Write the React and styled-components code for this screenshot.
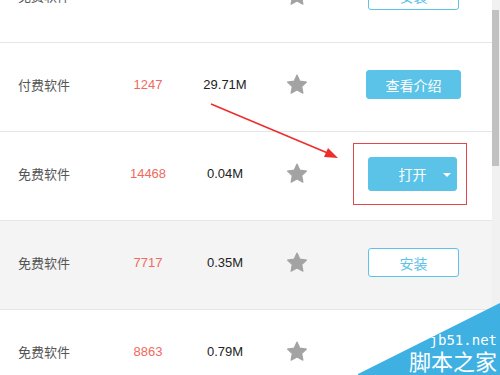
import styled, { createGlobalStyle } from "styled-components";

const GlobalStyle = createGlobalStyle`
  html, body {
    margin: 0;
    padding: 0;
    width: 500px;
    height: 375px;
    overflow: hidden;
    background: #fff;
  }
  body {
    font-family: "Liberation Sans", "Noto Sans CJK SC", sans-serif;
  }
`;

const Page = styled.div`
  position: relative;
  width: 500px;
  height: 375px;
  display: flex;
  overflow: hidden;
`;

const List = styled.div`
  width: 492px;
  margin-top: -46px;
  display: flex;
  flex-direction: column;
`;

const Row = styled.div`
  box-sizing: border-box;
  height: 89px;
  flex-shrink: 0;
  display: grid;
  grid-template-columns: 100px 60px 94px 50px 1fr;
  align-items: center;
  padding: 0 0 5px 18px;
  background: ${(p) => (p.$shaded ? "#f4f4f4" : "#fff")};
  border-bottom: 1px solid #e6e6e6;
`;

const Category = styled.div`
  font-family: "Noto Sans CJK SC", sans-serif;
  font-size: 13px;
  color: #555;
`;

const Count = styled.div`
  text-align: center;
  font-size: 13px;
  color: #f06a60;
`;

const Size = styled.div`
  text-align: center;
  font-size: 13px;
  color: #222;
`;

const StarCell = styled.div`
  display: flex;
  justify-content: center;
`;

const ActionCell = styled.div`
  position: relative;
  height: 34px;
  padding-left: ${(p) => p.$pad || 44}px;
  display: flex;
  align-items: center;
`;

const Button = styled.div`
  box-sizing: border-box;
  width: ${(p) => p.$w || 95}px;
  height: ${(p) => p.$h || 29}px;
  border-radius: 3px;
  display: flex;
  align-items: center;
  justify-content: center;
  gap: 16px;
  font-family: "Noto Sans CJK SC", sans-serif;
  font-size: 14px;
  color: ${(p) => (p.$outline ? "#5ac3e7" : "#fff")};
  background: ${(p) => (p.$outline ? "#fff" : "#5ac3e7")};
  border: 1px solid #5ac3e7;
  padding-left: ${(p) => p.$padLeft || 0}px;
`;

const Caret = styled.span`
  width: 0;
  height: 0;
  border-left: 4px solid transparent;
  border-right: 4px solid transparent;
  border-top: 4px solid #fff;
  margin-top: 2px;
`;

const Highlight = styled.div`
  position: absolute;
  left: 31px;
  top: -14px;
  width: 112px;
  height: 60px;
  border: 1px solid rgb(226, 71, 74);
`;

const Scrollbar = styled.div`
  width: 8px;
  background: #f1f1f1;
  display: flex;
  flex-direction: column;
  padding-top: 10px;
  box-sizing: border-box;
`;

const Thumb = styled.div`
  width: 7px;
  height: 156px;
  background: #c1c1c1;
`;

const Overlay = styled.svg`
  position: absolute;
  left: 0;
  top: 0;
  pointer-events: none;
`;

const Watermark = styled.div`
  position: absolute;
  right: 0;
  bottom: 0;
  width: 142px;
  height: 72px;
`;

const WatermarkText = styled.div`
  position: absolute;
  right: 3px;
  bottom: ${(p) => p.$bottom}px;
  color: #fff;
  font-family: ${(p) => (p.$mono ? '"DejaVu Sans Mono", monospace' : '"Noto Sans CJK SC", sans-serif')};
  font-size: ${(p) => p.$size}px;
  line-height: 1;
  white-space: nowrap;
`;

function Star() {
  return (
    <svg width="22" height="21" viewBox="0 0 24 23">
      <path
        d="M12 1.2l3.2 6.6 7.2 1-5.2 5 1.3 7.2L12 17.6 5.5 21l1.3-7.2-5.2-5 7.2-1z"
        fill="#a3a3a3"
        stroke="#a3a3a3"
        strokeWidth="1.2"
        strokeLinejoin="round"
      />
    </svg>
  );
}

const rows = [
  { cat: "免费软件", count: "21747", size: "1.90M", action: "install" },
  { cat: "付费软件", count: "1247", size: "29.71M", action: "info" },
  { cat: "免费软件", count: "14468", size: "0.04M", action: "open" },
  { cat: "免费软件", count: "7717", size: "0.35M", action: "install", shaded: true },
  { cat: "免费软件", count: "8863", size: "0.79M", action: "none" },
];

function Action({ type }) {
  if (type === "info") {
    return (
      <ActionCell>
        <Button>查看介绍</Button>
      </ActionCell>
    );
  }
  if (type === "open") {
    return (
      <ActionCell $pad={46}>
        <Button $w={89} $h={34} $padLeft={24}>
          打开
          <Caret />
        </Button>
        <Highlight />
      </ActionCell>
    );
  }
  if (type === "none") {
    return <ActionCell />;
  }
  return (
    <ActionCell $pad={46}>
      <Button $outline $w={91}>安装</Button>
    </ActionCell>
  );
}

export default function App() {
  return (
    <>
      <GlobalStyle />
      <Page>
        <List>
          {rows.map((r, i) => (
            <Row key={i} $shaded={r.shaded}>
              <Category>{r.cat}</Category>
              <Count>{r.count}</Count>
              <Size>{r.size}</Size>
              <StarCell>
                <Star />
              </StarCell>
              <Action type={r.action} />
            </Row>
          ))}
        </List>
        <Scrollbar>
          <Thumb />
        </Scrollbar>

        <Overlay width="500" height="375">
          <line x1="211" y1="104" x2="330" y2="154" stroke="#ee2d2d" strokeWidth="1.6" />
          <polygon points="338,158 324,157 328,148" fill="#ee2d2d" />
        </Overlay>

        <Watermark>
          <svg width="142" height="72" viewBox="0 0 142 72" style={{ position: "absolute", left: 0, top: 0 }}>
            <polygon points="0,71 142,0 142,72 0,72" fill="#3fb0e2" />
          </svg>
          <WatermarkText $mono $size={14} $bottom={28}>jb51.net</WatermarkText>
          <WatermarkText $size={22} $bottom={4}>脚本之家</WatermarkText>
        </Watermark>
      </Page>
    </>
  );
}
